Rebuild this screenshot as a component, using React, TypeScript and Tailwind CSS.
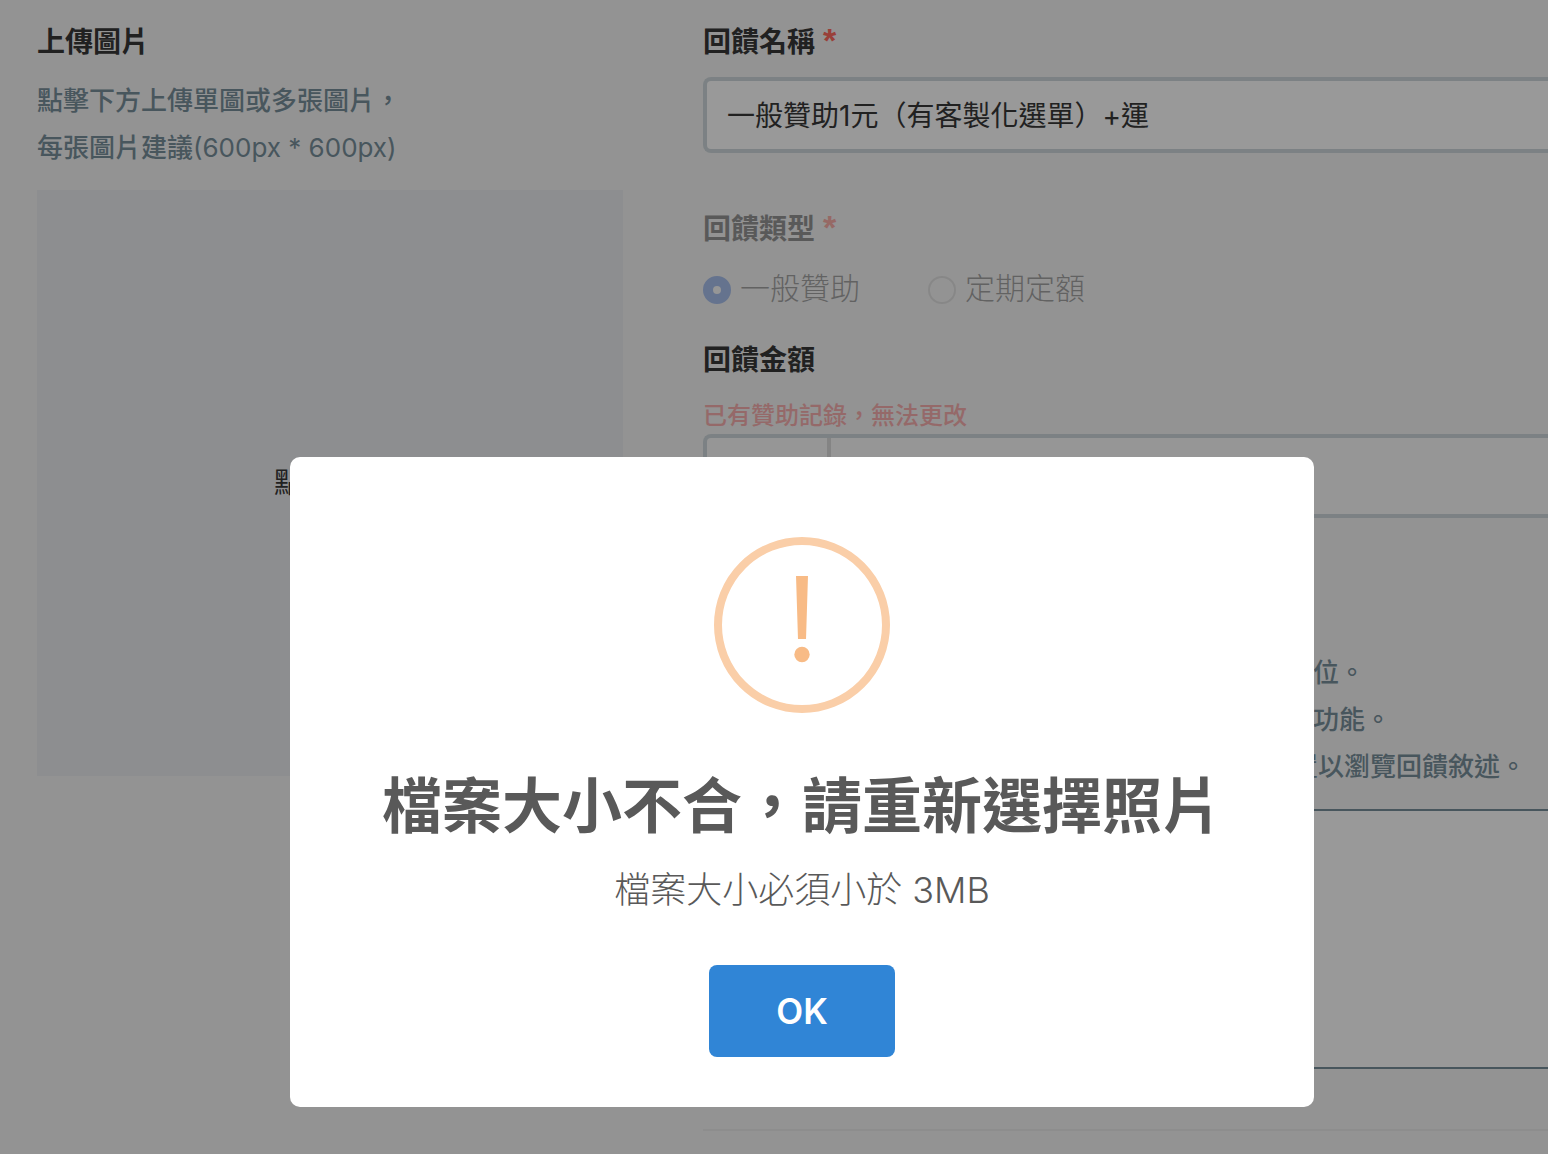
import { useState } from "react";

const noteLines = [
  { text: "欄位。", width: "max-w-[662px]" },
  { text: "功能。", width: "max-w-[688px]" },
  { text: "裝置以瀏覽回饋敘述。", width: "max-w-[823px]" },
];

function Required() {
  return (
    <span className="ml-2 font-['Liberation_Sans',sans-serif] text-[34px] leading-0 text-[#ff6b60]">*</span>
  );
}

function UploadPanel() {
  return (
    <section className="w-[586px] shrink-0">
      <h2 className="text-[28px] leading-[42px] font-bold">上傳圖片</h2>
      <p className="mt-3.5 text-[26px] leading-[47px] font-medium text-[#78909c]">
        點擊下方上傳單圖或多張圖片，
        <br />
        每張圖片建議<span className="font-normal">(600px * 600px)</span>
      </p>
      <button
        type="button"
        className="mt-[19px] flex aspect-square w-full items-center justify-center bg-[#ebedf0] text-[28px]"
      >
        點擊上傳
      </button>
    </section>
  );
}

function RewardForm() {
  const [name, setName] = useState("一般贊助1元（有客製化選單）+運");
  return (
    <form className="min-w-0 flex-1">
      <label htmlFor="reward-name" className="block text-[28px] leading-[42px] font-bold">
        回饋名稱
        <Required />
      </label>
      <input
        id="reward-name"
        value={name}
        onChange={(e) => setName(e.target.value)}
        className="mt-3.5 block h-[76px] w-full rounded-l-lg border-4 border-r-0 border-[#cfd8dc] bg-white px-5 pb-0.5 text-[28px] outline-none"
      />

      <fieldset className="mt-[55px] opacity-50" disabled>
        <legend className="contents">
          <span className="block text-[28px] leading-[42px] font-bold">
            回饋類型
            <Required />
          </span>
        </legend>
        <div className="mt-4 flex gap-[68px] text-[30px] leading-[44px] font-light text-[#555555]">
          <label className="flex items-center gap-[9px]">
            <input
              type="radio"
              name="reward-type"
              defaultChecked
              className="size-7 appearance-none rounded-full border-[10px] border-[#5f8de6] bg-white"
            />
            <span className="pb-1">一般贊助</span>
          </label>
          <label className="flex items-center gap-[9px]">
            <input
              type="radio"
              name="reward-type"
              className="size-7 appearance-none rounded-full border-2 border-[#d0d0d0] bg-white/30"
            />
            <span className="pb-1">定期定額</span>
          </label>
        </div>
      </fieldset>

      <label htmlFor="reward-price" className="mt-[25px] block text-[28px] leading-[42px] font-bold">
        回饋金額
      </label>
      <p className="mt-4 text-[24px] leading-[37px] font-medium text-[#f8b0b0]">已有贊助記錄，無法更改</p>
      <div className="flex h-[84px] rounded-l-lg border-4 border-r-0 border-[#cfd8dc] bg-[#fbfbfb]">
        <span className="w-31 border-r-4 border-[#dddddd]" />
        <input id="reward-price" disabled className="min-w-0 flex-1 px-5 text-[28px]" />
      </div>

      <div className="mt-[131px] text-right text-[26px] leading-[47px] font-medium text-[#78909c]">
        {noteLines.map((line) => (
          <p key={line.text} className={line.width}>
            {line.text}
          </p>
        ))}
      </div>
      <textarea
        aria-label="回饋敘述"
        className="mt-[19px] block h-[260px] w-full resize-none border-2 border-r-0 border-[#78909c] bg-white p-5 text-[28px] outline-none"
      />
      <hr className="mt-[60px] border-t-2 border-[#ebebeb]" />
    </form>
  );
}

function WarningIcon() {
  return (
    <svg viewBox="0 0 176 176" className="size-44" aria-hidden="true">
      <circle cx="88" cy="88" r="84" fill="none" stroke="#facea8" strokeWidth="8" />
      <path d="M82 39H94L92 102H84Z" fill="#f8bb86" />
      <circle cx="88" cy="117.500" r="7.700" fill="#f8bb86" />
    </svg>
  );
}

function AlertDialog() {
  return (
    <div className="fixed inset-0 flex items-start justify-center bg-black/40 pt-[457px] pl-14">
      <div
        role="alertdialog"
        aria-labelledby="alert-title"
        aria-describedby="alert-text"
        className="flex w-full max-w-5xl flex-col items-center rounded-[10px] bg-white pt-20 pb-[50px] text-[#595959]"
      >
        <WarningIcon />
        <h1 id="alert-title" className="mt-12 text-[60px] leading-[90px] font-bold">
          檔案大小不合，請重新選擇照片
        </h1>
        <p id="alert-text" className="mt-3 text-[36px] leading-[54px] font-light">
          檔案大小必須小於 3MB
        </p>
        <button
          type="button"
          className="mt-12 h-[92px] w-[186px] rounded-lg bg-[#3085d6] text-[35px] font-semibold text-white"
        >
          OK
        </button>
      </div>
    </div>
  );
}

export default function App() {
  return (
    <div className="min-h-screen bg-[#f5f5f5] font-[Inter,'Noto_Sans_CJK_TC',sans-serif] text-[#383838]">
      <main className="flex gap-20 pt-[21px] pl-[37px]">
        <UploadPanel />
        <RewardForm />
      </main>
      <AlertDialog />
    </div>
  );
}
